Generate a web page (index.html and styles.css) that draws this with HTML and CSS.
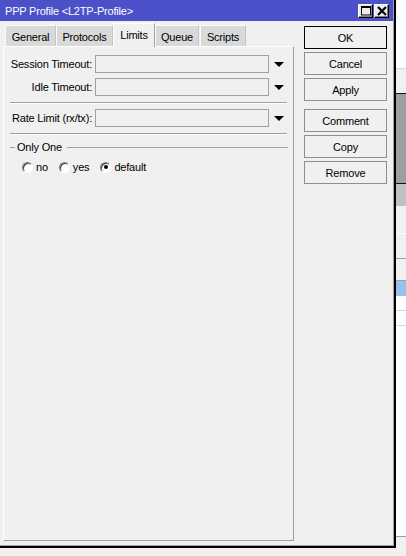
FILE: index.html
```html
<!DOCTYPE html>
<html>
<head>
<meta charset="utf-8">
<title>PPP Profile</title>
<link rel="stylesheet" href="styles.css">
</head>
<body>
<div class="window">
  <div class="window-inner">
    <div class="titlebar">
      <span class="title">PPP Profile &lt;L2TP-Profile&gt;</span>
      <span class="tbtn"><svg width="12" height="12" viewBox="0 0 12 12"><rect x="1.5" y="1.5" width="9" height="8.5" fill="none" stroke="#000" stroke-width="1"/><rect x="1" y="1" width="10" height="2" fill="#000"/></svg></span>
      <span class="tbtn"><svg width="12" height="12" viewBox="0 0 12 12"><path d="M2 2 L10 10 M10 2 L2 10" stroke="#000" stroke-width="2.2"/></svg></span>
    </div>
    <div class="main">
      <div class="left">
        <div class="tabs">
          <div class="tab w-general">General</div>
          <div class="tab w-protocols">Protocols</div>
          <div class="tab tab-active w-limits">Limits</div>
          <div class="tab w-queue">Queue</div>
          <div class="tab w-scripts">Scripts</div>
        </div>
        <div class="panel">
          <div class="row">
            <span class="label">Session Timeout:</span>
            <span class="field"></span>
            <span class="arrow"><svg width="10" height="5" viewBox="0 0 10 5"><polygon points="0,0 10,0 5,5" fill="#000"/></svg></span>
          </div>
          <div class="row">
            <span class="label">Idle Timeout:</span>
            <span class="field"></span>
            <span class="arrow"><svg width="10" height="5" viewBox="0 0 10 5"><polygon points="0,0 10,0 5,5" fill="#000"/></svg></span>
          </div>
          <div class="sep"></div>
          <div class="row">
            <span class="label">Rate Limit (rx/tx):</span>
            <span class="field"></span>
            <span class="arrow"><svg width="10" height="5" viewBox="0 0 10 5"><polygon points="0,0 10,0 5,5" fill="#000"/></svg></span>
          </div>
          <div class="sep sep-last"></div>
          <div class="group">
            <span class="dash"></span>
            <span class="group-title">Only One</span>
            <span class="group-line"></span>
          </div>
          <div class="radios">
            <label class="radio-item"><span class="radio"></span><span>no</span></label>
            <label class="radio-item"><span class="radio"></span><span>yes</span></label>
            <label class="radio-item"><span class="radio checked"><span class="dot"></span></span><span>default</span></label>
          </div>
        </div>
      </div>
      <div class="buttons">
        <div class="btn btn-default">OK</div>
        <div class="btn">Cancel</div>
        <div class="btn">Apply</div>
        <div class="btn btn-spaced">Comment</div>
        <div class="btn">Copy</div>
        <div class="btn">Remove</div>
      </div>
    </div>
  </div>
</div>
<div class="backdrop">
  <div class="bd-white h68"></div>
  <div class="bd-line-light"></div>
  <div class="bd-face h24"></div>
  <div class="bd-line-dark"></div>
  <div class="bd-gray h89"></div>
  <div class="bd-line-dark"></div>
  <div class="bd-silver h22"></div>
  <div class="bd-face h27"></div>
  <div class="bd-line-white"></div>
  <div class="bd-face h24"></div>
  <div class="bd-line-gray"></div>
  <div class="bd-face h21"></div>
  <div class="bd-line-gray"></div>
  <div class="bd-blue h15"></div>
  <div class="bd-white h14"></div>
  <div class="bd-line-light"></div>
  <div class="bd-white h14"></div>
  <div class="bd-line-light"></div>
  <div class="bd-white h210"></div>
  <div class="bd-line-gray"></div>
  <div class="bd-face bd-fill"></div>
</div>
</body>
</html>
```
FILE: styles.css
```css
* { box-sizing: border-box; }

body {
  margin: 0;
  height: 556px;
  overflow: hidden;
  background: #f0f0f0;
  font-family: "Liberation Sans", Arial, sans-serif;
  font-size: 11px;
  letter-spacing: -0.2px;
  color: #000;
  display: flex;
  align-items: flex-start;
}

.window {
  width: 396px;
  height: 548px;
  border-right: 2px solid #000;
  border-bottom: 2px solid #000;
  flex-shrink: 0;
}

.window-inner {
  height: 100%;
  border-right: 1px solid #a0a0a0;
  border-bottom: 1px solid #a0a0a0;
  display: flex;
  flex-direction: column;
}

.titlebar {
  height: 21px;
  flex-shrink: 0;
  background: #4c50c9;
  color: #fff;
  display: flex;
  align-items: center;
  padding: 0 4px 0 5px;
}

.title { flex: 1; }

.tbtn {
  width: 15px;
  height: 14px;
  margin-left: 1px;
  background: #ececec;
  border: 1px solid;
  border-color: #f8f8f8 #000 #000 #f8f8f8;
  box-shadow: inset -1px -1px 0 #808080;
  display: flex;
  align-items: center;
  justify-content: center;
}

.main {
  flex: 1;
  display: flex;
  padding: 0 0 4px 3px;
}

.left {
  width: 291px;
  display: flex;
  flex-direction: column;
}

.tabs {
  height: 26px;
  margin-bottom: -1px;
  padding-left: 2px;
  display: flex;
  align-items: flex-end;
}

.tab {
  height: 21px;
  margin-bottom: 1px;
  background: #d9d9d9;
  border-top: 1px solid #fafafa;
  border-left: 1px solid #fafafa;
  border-right: 1px solid #c4c4c4;
  display: flex;
  align-items: center;
  justify-content: center;
  padding-top: 1px;
  white-space: nowrap;
}

.tab-active {
  height: 24px;
  margin-bottom: 0;
  background: #f0f0f0;
  border-top: 1px solid #fff;
  border-left: 1px solid #fff;
  border-right: 1px solid #a0a0a0;
  position: relative;
  z-index: 1;
  padding-top: 0;
  padding-bottom: 1px;
}

.w-general { width: 51px; }
.w-protocols { width: 57px; }
.w-limits { width: 42px; }
.w-queue { width: 44px; }
.w-scripts { width: 46px; margin-left: 1px; }

.panel {
  height: 495px;
  border: 1px solid;
  border-color: #fff #a0a0a0 #a0a0a0 #fff;
  padding: 8px 6px 0 6px;
}

.row {
  display: flex;
  align-items: center;
  height: 18px;
}

.row + .row { margin-top: 5px; }

.label {
  width: 82px;
  margin-right: 3px;
  text-align: right;
  white-space: nowrap;
}

.field {
  width: 174px;
  height: 18px;
  border: 1px solid #a0a0a0;
  background: #f0f0f0;
}

.arrow {
  margin-left: 5px;
  display: flex;
}

.sep {
  height: 2px;
  border-top: 1px solid #a0a0a0;
  border-bottom: 1px solid #fff;
  margin: 6px 0 5px 0;
}

.group {
  display: flex;
  align-items: center;
  height: 14px;
}

.dash {
  width: 5px;
  border-top: 1px solid #a0a0a0;
  margin-right: 2px;
}

.group-line {
  flex: 1;
  border-top: 1px solid #a0a0a0;
  margin-left: 5px;
  margin-right: -1px;
}

.radios {
  display: flex;
  align-items: center;
  height: 14px;
  margin-top: 6px;
  padding-left: 12px;
  gap: 11px;
}

.radio-item {
  display: flex;
  align-items: center;
  gap: 3px;
}

.radio {
  width: 11px;
  height: 11px;
  border-radius: 50%;
  border: 1px solid;
  border-color: #808080 #fff #fff #808080;
  background: #fff;
  box-shadow: inset 1px 1px 0 #404040;
  display: flex;
  align-items: center;
  justify-content: center;
}

.dot {
  width: 4px;
  height: 4px;
  border-radius: 50%;
  background: #000;
}

.buttons {
  width: 83px;
  margin-left: 10px;
  padding-top: 5px;
  display: flex;
  flex-direction: column;
  gap: 3px;
}

.btn {
  height: 23px;
  border: 1px solid #8f8f8f;
  background: #f0f0f0;
  display: flex;
  align-items: center;
  justify-content: center;
}

.btn-default { border-color: #000; }
.btn-spaced { margin-top: 5px; }

.backdrop {
  width: 10px;
  height: 556px;
  display: flex;
  flex-direction: column;
}

.bd-white { background: #fff; }
.bd-face { background: #f0f0f0; }
.bd-gray { background: #9f9f9f; }
.bd-silver { background: #c0c0c0; }
.bd-blue { background: #99c0ec; }
.bd-line-light { height: 1px; background: #d9d9d9; }
.bd-line-dark { height: 1px; background: #111; }
.bd-line-white { height: 1px; background: #fff; }
.bd-line-gray { height: 1px; background: #a0a0a0; }
.bd-fill { flex: 1; }

.h14 { height: 14px; }
.h15 { height: 15px; }
.h21 { height: 21px; }
.h22 { height: 22px; }
.h24 { height: 24px; }
.h27 { height: 27px; }
.h68 { height: 68px; }
.h89 { height: 89px; }
.h210 { height: 210px; }
```
